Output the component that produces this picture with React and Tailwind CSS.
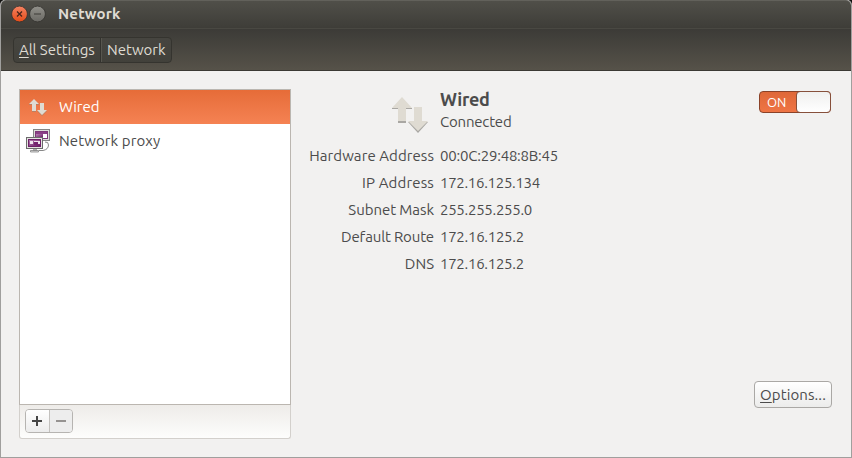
import React from "react";

const details = [
  { label: "Hardware Address", value: "00:0C:29:48:8B:45", lt: "tracking-[0.07px]", vt: "tracking-[-0.23px]" },
  { label: "IP Address", value: "172.16.125.134", lt: "tracking-[0.15px]", vt: "tracking-[-0.3px]" },
  { label: "Subnet Mask", value: "255.255.255.0", lt: "tracking-[-0.05px]", vt: "tracking-[-0.28px]" },
  { label: "Default Route", value: "172.16.125.2", lt: "tracking-[-0.15px]", vt: "tracking-[-0.28px]" },
  { label: "DNS", value: "172.16.125.2", lt: "tracking-[0px]", vt: "tracking-[-0.28px]" },
];

function SmallArrows() {
  return (
    <svg width="20" height="18" viewBox="0 0 20 18" className="mt-px block">
      <path d="M0 5H10V6H0ZM3 12H7V13H3ZM8 12H18L13 17Z" fill="#a5816c" opacity=".7" />
      <path d="M5 0L10 5H7V12H3V5H0ZM11 4H15V11H18L13 16L8 11H11Z" fill="#dfdbd2" />
    </svg>
  );
}

function LargeArrows() {
  return (
    <svg width="37" height="37" viewBox="0 0 37 37" className="block">
      <path d="M16 25H36L26 36Z" fill="#a9a7a3" />
      <path d="M0 11H20V12H0ZM6 24H14V26H6Z" fill="#a9a7a3" />
      <path d="M10 0L20 11H14V24H6V11H0ZM22 10H30V24H36L26 34L16 24H22Z" fill="#dfdbd2" />
    </svg>
  );
}

function ProxyIcon() {
  return (
    <svg width="24" height="24" viewBox="0 0 24 24" className="block">
      <defs>
        <linearGradient id="screen" x1="0" y1="0" x2="1" y2="1">
          <stop offset="0" stopColor="#b886b6" />
          <stop offset="1" stopColor="#65105f" />
        </linearGradient>
      </defs>
      <path d="M19 13Q22.5 12.5 22.5 16Q22.3 20.5 17 21.5H13" fill="none" stroke="#888" />
      <rect x="7.5" y=".5" width="16" height="11" fill="#dededb" stroke="#858585" />
      <rect x="9.5" y="2.5" width="12" height="7" fill="#fff" stroke="#7e3779" />
      <rect x="10" y="5" width="7" height="4" fill="url(#screen)" />
      <rect x="10" y="3" width="11" height="2" fill="#8a3f86" />
      <rect x=".5" y="8.5" width="16" height="11" fill="#e4e4e1" stroke="#6b6b6b" />
      <rect x="2.5" y="10.5" width="12" height="7" fill="url(#screen)" stroke="#6f2069" />
      <rect x="4" y="12" width="3" height="3" fill="#f0e6f0" />
      <rect x="8" y="12" width="6" height="3" fill="#fff" opacity=".85" />
      <rect x="8" y="13" width="4" height="3" fill="#75256f" />
      <path d="M7 20H11V22H7Z" fill="#aaa" />
      <path d="M4.5 21.5H12.5V23H4.5Z" fill="#ddd" stroke="#777" strokeWidth=".7" />
    </svg>
  );
}

function Header() {
  return (
    <header className="h-[71px] shrink-0 text-[#dfdbd2]">
      <div className="flex h-[28px] items-center rounded-t-[5px] border-t border-[#62615b] bg-linear-to-b from-[#504f49] to-[#3e3d38] pl-[11px]">
        <svg width="34" height="18" viewBox="0 0 34 18" className="-mt-px block overflow-visible">
          <defs>
            <linearGradient id="close" x1="0" y1="0" x2="0" y2="1">
              <stop offset="0" stopColor="#f58362" />
              <stop offset="1" stopColor="#e64c18" />
            </linearGradient>
            <linearGradient id="minimize" x1="0" y1="0" x2="0" y2="1">
              <stop offset="0" stopColor="#91908a" />
              <stop offset="1" stopColor="#6a6964" />
            </linearGradient>
          </defs>
          <circle cx="7.5" cy="9" r="7.9" fill="url(#close)" stroke="#33322e" strokeWidth=".8" />
          <path d="M5 6.5L10 11.5M10 6.5L5 11.5" stroke="#49251a" strokeWidth="1.3" />
          <circle cx="25.5" cy="9" r="7.9" fill="url(#minimize)" stroke="#33322e" strokeWidth=".8" />
          <path d="M22 9H29" stroke="#3c3b37" strokeWidth="1.2" />
        </svg>
        <h1 className="-mt-[2px] ml-3 text-[15px] font-bold leading-[20px] tracking-[0.15px]">Network</h1>
      </div>
      <div className="flex h-[43px] items-center border-t border-b border-t-[#494842] border-b-[#3b3934] bg-linear-to-b from-[#3c3b37] to-[#565249] pl-3">
        <nav className="flex h-[26px] overflow-hidden rounded-[4px] border border-[#35342f] bg-linear-to-b from-[#464540] to-[#42413b] text-[15px] leading-[23px]">
          <button className="flex w-[87px] whitespace-nowrap border-r border-[#33322e] pl-[5px] tracking-[-0.05px]"><span className="underline underline-offset-[2px]">A</span>ll Settings</button>
          <button className="flex w-[70px] border-l border-[#57564f] pl-[5px]">Network</button>
        </nav>
      </div>
    </header>
  );
}

export default function App() {
  return (
    <div className="h-[458px] w-[852px] bg-[#11110f] font-['Ubuntu','Noto_Sans',sans-serif] text-[15px] text-[#4c4c4c]">
      <div className="flex h-full flex-col overflow-hidden rounded-t-[5px] border-x border-b border-[#a09f9d] bg-[#f2f1f0]">
        <Header />
        <main className="flex min-h-0 flex-1 pt-[18px] pl-[18px]">
          <aside className="flex h-[350px] w-[272px] shrink-0 flex-col">
            <div className="h-[316px] border border-[#bbb6b0] bg-white">
              <div className="flex h-[34px] items-center bg-linear-to-b from-[#e66c38] to-[#f58253] pl-[9px] text-white">
                <SmallArrows />
                <span className="ml-[10px]">Wired</span>
              </div>
              <div className="flex h-[34px] items-center pl-[6px]">
                <ProxyIcon />
                <span className="ml-[9px] tracking-[0.1px]">Network proxy</span>
              </div>
            </div>
            <div className="flex h-[34px] items-center rounded-b-[3px] border border-t-0 border-[#d3d0cc] bg-linear-to-b from-[#eeece9] to-[#fdfdfc] pl-[5px]">
              <div className="-mt-px flex h-[24px] w-[48px] overflow-hidden rounded-[4px] border border-[#b6b4b1]">
                <button className="flex w-[24px] items-center justify-center border-r border-[#c3c1be] bg-linear-to-b from-white to-[#ececec] pr-px">
                  <svg width="10" height="10" viewBox="0 0 10 10"><path d="M0 5H10M5 0V10" stroke="#454545" strokeWidth="2" /></svg>
                </button>
                <span className="flex flex-1 items-center justify-center bg-[#ededed]">
                  <svg width="10" height="10" viewBox="0 0 10 10"><path d="M0 5H10" stroke="#969391" strokeWidth="2" /></svg>
                </span>
              </div>
            </div>
          </aside>
          <section className="flex w-[380px] flex-col">
            <div className="flex h-[53px] pl-[101px]">
              <div className="mt-[8px] w-[48px]"><LargeArrows /></div>
              <div>
                <h2 className="h-[22px] text-[18px] font-bold leading-[20px] tracking-[-0.3px]">Wired</h2>
                <p className="leading-[21px] tracking-[-0.2px]">Connected</p>
              </div>
            </div>
            <dl>
              {details.map((item) => (
                <div key={item.label} className="flex h-[27px] items-center leading-[20px]">
                  <dt className="w-[143px] text-right"><span className={item.lt}>{item.label}</span></dt>
                  <dd className="ml-[6px]"><span className={item.vt}>{item.value}</span></dd>
                </div>
              ))}
            </dl>
          </section>
          <div className="ml-auto flex h-[320px] w-[80px] flex-col items-end justify-between">
            <button className="mt-[2px] mr-px flex h-[22px] w-[72px] rounded-[4px] border border-[#8b4228] bg-linear-to-b from-[#df6838] to-[#ef7545] text-white">
              <span className="w-[36px] pl-[7px] text-left text-[13px] leading-[20px]">ON</span>
              <span className="-my-px -mr-px h-[22px] flex-1 rounded-[4px] border border-[#87503b] bg-linear-to-b from-[#f0f0ef] to-white" />
            </button>
            <button className="mb-px flex h-[27px] w-[78px] items-center justify-center rounded-[4px] border border-[#aaa8a5] bg-linear-to-b from-white to-[#ececeb] pt-px tracking-[0.1px]"><span className="underline underline-offset-[2px]">O</span>ptions...</button>
          </div>
          <div className="w-[19px] shrink-0" />
        </main>
      </div>
    </div>
  );
}
